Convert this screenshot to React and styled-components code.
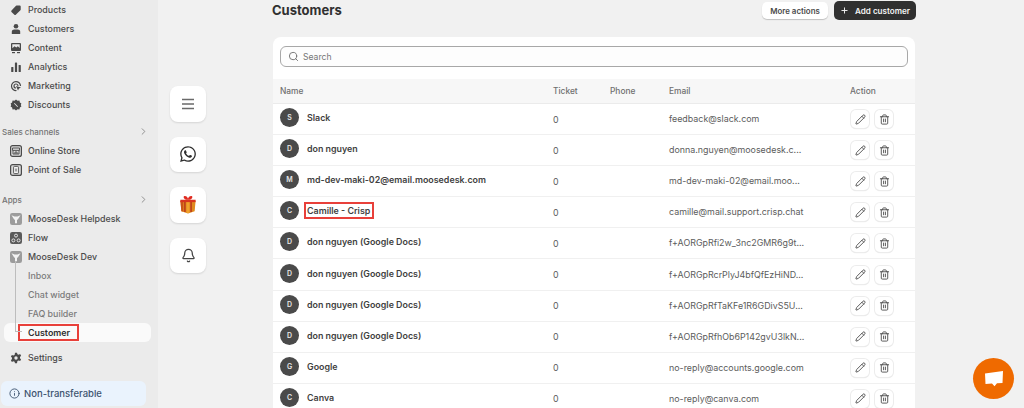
import React from "react";
import styled, { createGlobalStyle } from "styled-components";
import { Bell, Info, Pencil, Plus, Search, Trash2, ChevronRight } from "lucide-react";
import { FaWhatsapp } from "react-icons/fa";

const Global = createGlobalStyle`
  html, body { margin: 0; padding: 0; background: #f1f1f1; }
  body { font-family: Inter, "Liberation Sans", sans-serif; }
  * { box-sizing: border-box; }
`;

const Page = styled.div`
  position: relative;
  display: flex;
  width: 1024px;
  height: 408px;
  overflow: hidden;
  background: #f1f1f1;
`;

/* sidebar */
const Sidebar = styled.aside`
  width: 158px;
  flex: none;
  background: #ebebeb;
  display: flex;
  flex-direction: column;
`;

const NavRow = styled.div`
  height: 19px;
  margin-top: ${p => p.$top || 0}px;
  display: flex;
  align-items: center;
  gap: 6px;
  padding-left: 10px;
  font-size: 8.9px;
  font-weight: 500;
  color: #4a4a4a;
  white-space: nowrap;
`;

const IconSlot = styled.span`
  width: 12px;
  height: 12px;
  flex: none;
  display: flex;
  align-items: center;
  justify-content: center;
`;

const SectionRow = styled.div`
  height: 19px;
  margin-top: ${p => p.$top}px;
  display: flex;
  align-items: center;
  justify-content: space-between;
  padding: 0 9px 0 2px;
  font-size: 8px;
  font-weight: 500;
  color: #737373;
`;

const SubTree = styled.div`
  position: relative;
  display: flex;
  flex-direction: column;
`;

const TreeLine = styled.span`
  position: absolute;
  left: 15px;
  top: -5px;
  height: 71px;
  width: 1px;
  background: #bdbdbd;
`;

const TreeArrow = styled.span`
  position: absolute;
  left: 16px;
  top: 65px;
  width: 6px;
  height: 1px;
  background: #bdbdbd;
`;

const SubRow = styled.div`
  height: 19px;
  padding-left: 28px;
  display: flex;
  align-items: center;
  font-size: 8.9px;
  font-weight: 500;
  color: #7b7b7b;
`;

const ActiveRow = styled.div`
  height: 19px;
  margin: 0 7px 0 4px;
  padding-left: 14px;
  display: flex;
  align-items: center;
  background: #fafafa;
  border-radius: 6px;
  font-size: 8.9px;
  font-weight: 600;
  color: #303030;
`;

const RedBox = styled.span`
  display: inline-flex;
  align-items: center;
  height: ${p => p.$h}px;
  padding: 0 ${p => p.$right}px 0 ${p => p.$left}px;
  border: 2px solid #e8403a;
`;

const Banner = styled.div`
  margin: 14px 12px 0 1px;
  height: 25px;
  background: #eaf3fd;
  border-radius: 6px;
  display: flex;
  align-items: center;
  gap: 4px;
  padding-left: 8px;
  font-size: 9.5px;
  font-weight: 500;
  color: #3d5470;
`;

/* floating button rail */
const Rail = styled.div`
  width: 114px;
  flex: none;
  padding: 86px 0 0 12px;
  display: flex;
  flex-direction: column;
  gap: 15px;
`;

const RailButton = styled.div`
  width: 36px;
  height: 35.5px;
  background: #fff;
  border-radius: 8px;
  box-shadow: 0 1px 2px rgba(0, 0, 0, 0.12);
  display: flex;
  align-items: center;
  justify-content: center;
  color: #3a3a3a;
`;

/* main content */
const Main = styled.main`
  width: 642px;
  flex: none;
  margin-left: 1px;
`;

const Header = styled.header`
  height: 37px;
  padding: 2px 0 0 0;
  display: flex;
  justify-content: space-between;
  align-items: flex-start;
`;

const Title = styled.h1`
  margin: 0 0 0 -1px;
  font-size: 13px;
  line-height: 17px;
  font-weight: 700;
  color: #303030;
`;

const HeaderActions = styled.div`
  display: flex;
  gap: 6px;
  margin-right: -1px;
`;

const GhostButton = styled.button`
  height: 17px;
  width: 66px;
  padding: 0;
  border: 0;
  border-radius: 5px;
  background: #fff;
  box-shadow: 0 1px 1px rgba(0, 0, 0, 0.2);
  font: 600 7.9px Inter, sans-serif;
  color: #4a4a4a;
`;

const DarkButton = styled.button`
  height: 19px;
  width: 82px;
  margin-top: -1px;
  padding: 0;
  border: 0;
  border-radius: 5px;
  background: #303030;
  display: flex;
  align-items: center;
  justify-content: center;
  gap: 6px;
  font: 600 8.1px Inter, sans-serif;
  color: #f4f4f4;
`;

const Card = styled.section`
  background: #fff;
  border-radius: 8px 8px 0 0;
  height: 371px;
  overflow: hidden;
`;

const SearchWrap = styled.div`
  height: 42px;
  padding: 9px 7px 0 7px;
`;

const SearchBox = styled.div`
  height: 21px;
  border: 1px solid #a8a8a8;
  border-radius: 6px;
  display: flex;
  align-items: center;
  gap: 4px;
  padding-left: 7px;
  font-size: 8.6px;
  color: #767676;
  background: #fdfdfd;
`;

const columns = "273px 57px 59px 181px 1fr";

const HeadRow = styled.div`
  display: grid;
  grid-template-columns: ${columns};
  align-items: center;
  height: 25px;
  padding-left: 7px;
  background: #f7f7f7;
  border-bottom: 1px solid #ebebeb;
  font-size: 8.4px;
  font-weight: 500;
  color: #6f6f6f;
`;

const Row = styled.div`
  display: grid;
  grid-template-columns: ${columns};
  align-items: center;
  height: 31.1px;
  padding-left: 7px;
  border-bottom: 1px solid #f0f0f0;
  font-size: 8.9px;
  color: #5c5c5c;
`;

const NameCell = styled.div`
  display: flex;
  align-items: center;
  gap: 8px;
  font-weight: 600;
  color: #3f3f3f;
  white-space: nowrap;
  padding-bottom: 3px;
`;

const EmailCell = styled.span`
  padding-bottom: 1px;
`;

const Avatar = styled.span`
  width: 19px;
  height: 19px;
  flex: none;
  border-radius: 50%;
  background: #4a4a4a;
  color: #e6e6e6;
  font-size: 7px;
  font-weight: 600;
  display: flex;
  align-items: center;
  justify-content: center;
`;

const Actions = styled.div`
  display: flex;
  gap: 6px;
  margin-left: 1px;
`;

const IconButton = styled.span`
  width: 18px;
  height: 18px;
  background: #fff;
  border-radius: 5px;
  box-shadow: 0 0 0 1px #ececec, 0 1px 1px rgba(0, 0, 0, 0.16);
  display: flex;
  align-items: center;
  justify-content: center;
  color: #4f4f4f;
`;

const Fab = styled.div`
  position: absolute;
  left: 973px;
  top: 358px;
  width: 41px;
  height: 41px;
  border-radius: 50%;
  background: #ef6a00;
  display: flex;
  align-items: center;
  justify-content: center;
`;

const Mono = ({ children }) => (
  <svg width="12" height="12" viewBox="0 0 12 12" fill="#4a4a4a">{children}</svg>
);

const navIcons = {
  products: <Mono><path d="M1.5 6.5 6 1.8a1 1 0 0 1 .7-.3h3a1 1 0 0 1 1 1v3a1 1 0 0 1-.3.7L5.8 10.700a1 1 0 0 1-1.400 0L1.500 7.900a1 1 0 0 1 0-1.400z" /></Mono>,
  customers: <Mono><circle cx="6" cy="3.2" r="2.3" /><path d="M1.8 11V8.800C1.800 7.400 3 6.600 4.200 6.600h3.600c1.200 0 2.400.8 2.400 2.200V11z" /></Mono>,
  content: <Mono><path fillRule="evenodd" d="M2 1h8a1 1 0 0 1 1 1v6a1 1 0 0 1-1 1H2a1 1 0 0 1-1-1V2a1 1 0 0 1 1-1zm.3 1.200v4l2.300-2 1.700 1.300 1.500-1.200 1.900 1.600V2.200z" /><rect x="2" y="10" width="3" height="1.2" /><rect x="7" y="10" width="3" height="1.2" /></Mono>,
  analytics: <Mono><rect x="1.2" y="6" width="2.2" height="5" rx=".6" /><rect x="4.9" y="1.5" width="2.2" height="9.5" rx=".6" /><rect x="8.6" y="4" width="2.2" height="7" rx=".6" /></Mono>,
  marketing: <Mono><path fill="none" stroke="#4a4a4a" strokeWidth="1.2" d="M10.500 6a4.500 4.500 0 1 0-4 4.500" /><path fill="none" stroke="#4a4a4a" strokeWidth="1.2" d="M8 6a2 2 0 1 0-2 2" /><path d="m6 6 5 1.600-2 1-1 2z" /></Mono>,
  discounts: <Mono><path fillRule="evenodd" d="M6 .6 7.500 1.700l1.900-.1.500 1.800 1.500 1.200-.6 1.400.6 1.400-1.500 1.200-.5 1.800-1.900-.1L6 11.400l-1.500-1.100-1.900.1-.5-1.800L.6 7.400l.6-1.400-.6-1.400 1.500-1.200.5-1.800 1.900.1zM4.600 4 4 4.600 7.400 8 8 7.400z" /></Mono>,
  settings: <Mono><path fillRule="evenodd" d="M5 .7h2l.4 1.500 1.300.6 1.400-.7 1 1.700-1.100 1.100v1.400l1.100 1.100-1 1.700-1.400-.7-1.300.6L7 11.300H5l-.4-1.500-1.300-.6-1.400.7-1-1.700 1.100-1.100V5.700L.9 4.600l1-1.700 1.400.7 1.300-.6zM6 4.300a1.700 1.700 0 1 0 0 3.400 1.700 1.700 0 0 0 0-3.400z" /></Mono>,
};

const AppTile = ({ children, bg = "#8d8d8d" }) => (
  <svg width="12" height="12" viewBox="0 0 12 12">
    <rect width="12" height="12" rx="2.2" fill={bg} />
    {children}
  </svg>
);

const Moose = () => (
  <AppTile bg="#9c9c9c">
    <path d="M1.500 2.200 4.500 3.400h3l3-1.200-2.500 4L7 7v3.200H5V7L4 6.200z" fill="#f3f3f3" />
  </AppTile>
);

const Store = () => (
  <svg width="12" height="12" viewBox="0 0 12 12" fill="none" stroke="#4a4a4a">
    <rect x=".6" y=".6" width="10.8" height="10.8" rx="2" fill="#d8d8d8" strokeWidth="1.2" />
    <path d="M2.500 3h7v2.400h-7zM3 5.400V9h6V5.400M5 9V7h2v2" strokeWidth=".9" />
  </svg>
);

const Pos = () => (
  <svg width="12" height="12" viewBox="0 0 12 12" fill="none" stroke="#4a4a4a">
    <rect x=".6" y=".6" width="10.8" height="10.8" rx="2" fill="#d8d8d8" strokeWidth="1.2" />
    <rect x="3.6" y="2.4" width="4.8" height="7.2" rx=".8" fill="#f5f5f5" strokeWidth=".9" />
    <path d="M6 4.500v3" strokeWidth="1" />
  </svg>
);

const FlowIcon = () => (
  <AppTile bg="#5a5a5a">
    <circle cx="6" cy="3.6" r="1.5" fill="none" stroke="#eee" strokeWidth=".9" />
    <circle cx="3.4" cy="8.4" r="1.5" fill="none" stroke="#eee" strokeWidth=".9" />
    <circle cx="8.6" cy="8.4" r="1.5" fill="none" stroke="#eee" strokeWidth=".9" />
  </AppTile>
);

const Gift = () => (
  <svg width="18" height="19" viewBox="0 0 18 20">
    <path d="M1 6h16l-1 11-7 2.500L2 17z" fill="#e08a1e" />
    <path d="M1 6h3v11.300L2 17z" fill="#c9541a" />
    <path d="M7.500 6h3v13H7.500z" fill="#f0a12c" />
    <path d="M11.500 6H13v12H11.500zM5 6h1.500v12H5z" fill="#b8341a" />
    <path d="M1 5h16v2.500H1z" fill="#d8351f" />
    <path d="M9 5C6.500 5 4 4 4.500 1.500 6.500.5 8.500 2 9 4c.5-2 2.500-3.500 4.500-2.500C14 4 11.500 5 9 5z" fill="#e02a20" />
  </svg>
);

const ChatIcon = () => (
  <svg width="20" height="18" viewBox="0 0 20 18" fill="#fff">
    <path d="M1 3.500 19 1l-.5 12-5.500.3-2.500 3-2.500-2.800L1.500 14z" />
  </svg>
);

const customers = [
  ["S", "Slack", "feedback@slack.com"],
  ["D", "don nguyen", "donna.nguyen@moosedesk.c..."],
  ["M", "md-dev-maki-02@email.moosedesk.com", "md-dev-maki-02@email.moo..."],
  ["C", "Camille - Crisp", "camille@mail.support.crisp.chat", true],
  ["D", "don nguyen (Google Docs)", "f+AORGpRfi2w_3nc2GMR6g9t..."],
  ["D", "don nguyen (Google Docs)", "f+AORGpRcrPlyJ4bfQfEzHiND..."],
  ["D", "don nguyen (Google Docs)", "f+AORGpRfTaKFe1R6GDivS5U..."],
  ["D", "don nguyen (Google Docs)", "f+AORGpRfhOb6P142gvU3lkN..."],
  ["G", "Google", "no-reply@accounts.google.com"],
  ["C", "Canva", "no-reply@canva.com"],
];

const Nav = ({ icon, top, children }) => (
  <NavRow $top={top}>
    <IconSlot>{icon}</IconSlot>
    {children}
  </NavRow>
);

export default function App() {
  return (
    <Page>
      <Global />
      <Sidebar>
        <Nav icon={navIcons.products}>Products</Nav>
        <Nav icon={navIcons.customers}>Customers</Nav>
        <Nav icon={navIcons.content}>Content</Nav>
        <Nav icon={navIcons.analytics}>Analytics</Nav>
        <Nav icon={navIcons.marketing}>Marketing</Nav>
        <Nav icon={navIcons.discounts}>Discounts</Nav>
        <SectionRow $top={8}>Sales channels <ChevronRight size={11} color="#8a8a8a" /></SectionRow>
        <Nav icon={<Store />}>Online Store</Nav>
        <Nav icon={<Pos />}>Point of Sale</Nav>
        <SectionRow $top={11}>Apps <ChevronRight size={11} color="#8a8a8a" /></SectionRow>
        <Nav icon={<Moose />}>MooseDesk Helpdesk</Nav>
        <Nav icon={<FlowIcon />}>Flow</Nav>
        <Nav icon={<Moose />}>MooseDesk Dev</Nav>
        <SubTree>
          <TreeLine />
          <TreeArrow />
          <SubRow>Inbox</SubRow>
          <SubRow>Chat widget</SubRow>
          <SubRow>FAQ builder</SubRow>
          <ActiveRow>
            <RedBox $h={17} $left={8} $right={7}>Customer</RedBox>
          </ActiveRow>
        </SubTree>
        <Nav icon={navIcons.settings} top={6}>Settings</Nav>
        <Banner>
          <Info size={11} color="#3d5470" />
          Non-transferable
        </Banner>
      </Sidebar>

      <Rail>
        <RailButton>
          <svg width="14" height="12" viewBox="0 0 14 12" stroke="#6a6a6a" strokeWidth="1.4">
            <path d="M1 1.500h12M1 6h12M1 10.500h12" />
          </svg>
        </RailButton>
        <RailButton><FaWhatsapp size={18} color="#2e2e2e" /></RailButton>
        <RailButton><Gift /></RailButton>
        <RailButton><Bell size={15} color="#444" /></RailButton>
      </Rail>

      <Main>
        <Header>
          <Title>Customers</Title>
          <HeaderActions>
            <GhostButton>More actions</GhostButton>
            <DarkButton><Plus size={9} strokeWidth={2.5} />Add customer</DarkButton>
          </HeaderActions>
        </Header>
        <Card>
          <SearchWrap>
            <SearchBox>
              <Search size={11} color="#707070" />
              Search
            </SearchBox>
          </SearchWrap>
          <HeadRow>
            <span>Name</span>
            <span>Ticket</span>
            <span>Phone</span>
            <span>Email</span>
            <span>Action</span>
          </HeadRow>
          {customers.map(([letter, name, email, marked], i) => (
            <Row key={i}>
              <NameCell>
                <Avatar>{letter}</Avatar>
                {marked ? <RedBox $h={17} $left={1} $right={2} style={{ marginLeft: -3 }}>{name}</RedBox> : name}
              </NameCell>
              <span>0</span>
              <span />
              <EmailCell>{email}</EmailCell>
              <Actions>
                <IconButton><Pencil size={11} /></IconButton>
                <IconButton><Trash2 size={11} /></IconButton>
              </Actions>
            </Row>
          ))}
        </Card>
      </Main>

      <Fab><ChatIcon /></Fab>
    </Page>
  );
}
